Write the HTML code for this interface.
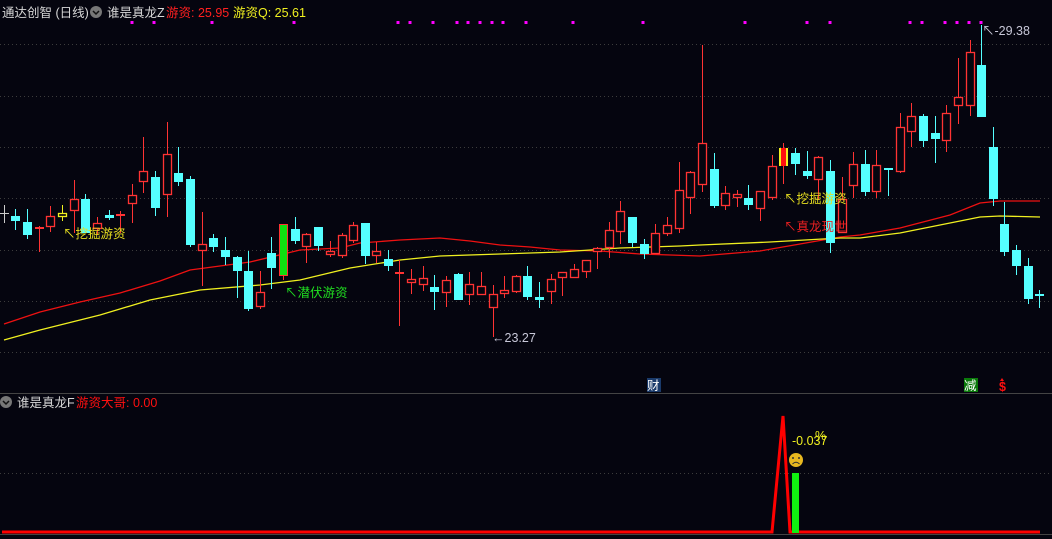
<!DOCTYPE html>
<html><head><meta charset="utf-8">
<style>
html,body{margin:0;padding:0;background:#05050f;}
body{width:1052px;height:539px;overflow:hidden;position:relative;font-family:"Liberation Sans","Noto Sans CJK SC",sans-serif;}
svg{position:absolute;left:0;top:0;}
.t{font-family:"Liberation Sans","Noto Sans CJK SC",sans-serif;font-size:12.5px;}
</style></head>
<body>
<svg id="s" width="1052" height="539" viewBox="0 0 1052 539" xmlns="http://www.w3.org/2000/svg">
<rect width="1052" height="539" fill="#05050f"/>
<g stroke="#3c3c3c" stroke-width="1" stroke-dasharray="1,3">
<line x1="0" y1="44.5" x2="1052" y2="44.5"/>
<line x1="0" y1="96.5" x2="1052" y2="96.5"/>
<line x1="0" y1="147.5" x2="1052" y2="147.5"/>
<line x1="0" y1="198.5" x2="1052" y2="198.5"/>
<line x1="0" y1="250.5" x2="1052" y2="250.5"/>
<line x1="0" y1="301.5" x2="1052" y2="301.5"/>
<line x1="0" y1="352.5" x2="1052" y2="352.5"/>
<line x1="0" y1="473.5" x2="1052" y2="473.5"/>
</g>
<line x1="0" y1="393.5" x2="1052" y2="393.5" stroke="#444" stroke-width="1"/>
<line x1="0" y1="534.5" x2="1052" y2="534.5" stroke="#444" stroke-width="1"/>
<!-- moving averages -->
<polyline fill="none" stroke="#ee1111" stroke-width="1.3" points="4,324 40,312 80,302 120,293 160,281 190,270 250,262 300,250 340,248 360,243 400,240 440,238 470,241 500,245 530,247 560,250 600,251 640,254 700,256 760,251 800,244 840,237 860,235 900,228 950,215 980,203 1000,201 1040,201"/>
<polyline fill="none" stroke="#f0f020" stroke-width="1.3" points="4,340 40,330 100,315 150,300 200,290 260,285 300,280 350,268 400,260 440,256 500,254 560,252 620,248 680,246 700,245 770,242 840,238 860,238 900,233 940,225 980,217 1000,216 1040,217"/>
<g id="candles"></g>
<g fill="#ff00ff" id="dots"></g>
<!-- annotations -->
<text x="63" y="238" class="t" fill="#e8e020">↖挖掘游资</text>
<text x="285" y="297" class="t" fill="#20e020">↖潜伏游资</text>
<text x="784" y="203" class="t" fill="#e8e020">↖挖掘游资</text>
<text x="784" y="231" class="t" fill="#ee2020">↖真龙现世</text>
<text x="492" y="342" class="t" fill="#c8c8d8">←23.27</text>
<text x="982" y="35" class="t" fill="#c8c8d8">↖-29.38</text>
<!-- header -->
<text x="2" y="17" class="t" fill="#d8d8d8">通达创智 (日线)</text>
<circle cx="96" cy="12" r="6" fill="#777"/>
<path d="M93 11 L96 14 L99 11" stroke="#111" stroke-width="1.5" fill="none"/>
<text x="107" y="17" class="t" fill="#d8d8d8">谁是真龙Z</text>
<text x="166" y="17" class="t" fill="#ff2020">游资: 25.95</text>
<text x="233" y="17" class="t" fill="#f0f020">游资Q: 25.61</text>
<!-- lower panel -->
<rect x="647" y="378" width="14" height="14" fill="#1a3a6a"/>
<text x="647" y="390" class="t" fill="#fff" font-size="12">财</text>
<rect x="964" y="378" width="14" height="14" fill="#0a7a0a"/>
<text x="964" y="390" class="t" fill="#fff" font-size="12">减</text>
<text x="999" y="391" class="t" fill="#ff1010" font-size="12" font-weight="bold">$</text>
<path d="M1000 381 L1002 378 L1004 381Z" fill="#ff1010"/>
<circle cx="6" cy="402" r="6" fill="#777"/>
<path d="M3 401 L6 404 L9 401" stroke="#111" stroke-width="1.5" fill="none"/>
<text x="17" y="407" class="t" fill="#d8d8d8">谁是真龙F</text>
<text x="76" y="407" class="t" fill="#ff1010">游资大哥: 0.00</text>
<polyline fill="none" stroke="#ff0000" stroke-width="3" points="2,532 772,532 783,416 790,532 1040,532"/>
<rect x="792" y="473" width="7" height="60" fill="#10f010"/>
<text x="792" y="445" class="t" fill="#f0f020">-0.037</text>
<text x="815" y="440" class="t" fill="#f0f020" font-size="10">%</text>
<circle cx="796" cy="460" r="7" fill="#e8b820"/>
<circle cx="793" cy="458" r="1" fill="#333"/><circle cx="799" cy="458" r="1" fill="#333"/>
<path d="M792.5 464 Q796 460.5 799.5 464" stroke="#333" stroke-width="1" fill="none"/>
</svg>
<script>
var C=[[15,216,221,209,230,'c'],[27,222,235,209,239,'c'],[39,227,229,226,252,'r'],[50,216,227,206,232,'r'],[62,213,217,205,221,'y'],[74,199,211,180,233,'r'],[85,199,233,194,233,'c'],[97,223,229,217,235,'r'],[109,215,218,210,220,'c'],[120,214,216,211,233,'r'],[132,195,204,184,223,'r'],[143,171,182,137,193,'r'],[155,177,208,171,216,'c'],[167,154,195,122,217,'r'],[178,173,182,147,186,'c'],[190,179,245,176,247,'c'],[202,244,251,212,286,'r'],[213,238,247,234,252,'c'],[225,250,257,237,265,'c'],[237,257,271,256,298,'c'],[248,271,309,251,311,'c'],[260,292,307,271,309,'r'],[271,253,268,237,289,'c'],[283,224,276,224,280,'g'],[295,229,241,217,244,'c'],[306,234,247,233,263,'r'],[318,227,246,227,251,'c'],[330,251,255,241,257,'r'],[342,235,256,233,258,'r'],[353,225,241,222,243,'r'],[365,223,256,223,264,'c'],[376,251,256,242,263,'r'],[388,259,266,250,271,'c'],[399,272,274,260,326,'r'],[411,279,283,269,294,'r'],[423,278,285,266,291,'r'],[434,287,292,275,310,'c'],[446,280,293,276,307,'r'],[458,274,300,273,300,'c'],[469,284,295,272,305,'r'],[481,286,295,272,295,'r'],[493,294,308,285,337,'r'],[504,290,294,276,298,'r'],[516,276,292,275,293,'r'],[527,276,297,266,300,'c'],[539,297,300,282,308,'c'],[551,279,292,274,304,'r'],[562,272,278,272,296,'r'],[574,269,278,264,278,'r'],[586,260,272,260,278,'r'],[597,248,252,247,269,'r'],[609,230,248,222,258,'r'],[620,211,232,201,244,'r'],[632,217,243,217,247,'c'],[644,244,254,239,259,'c'],[655,233,254,224,254,'r'],[667,225,234,217,236,'r'],[679,190,229,162,233,'r'],[690,172,198,171,214,'r'],[702,143,185,45,192,'r'],[714,169,206,153,208,'c'],[725,193,206,186,210,'r'],[737,194,198,190,207,'r'],[748,198,205,185,210,'c'],[760,191,209,191,221,'r'],[772,166,198,155,200,'r'],[783,148,166,143,184,'yr'],[795,153,164,148,175,'c'],[807,171,176,151,179,'c'],[818,157,180,156,200,'r'],[830,171,243,160,253,'c'],[842,199,233,177,233,'r'],[853,164,186,152,198,'r'],[865,164,192,150,196,'c'],[876,165,192,150,198,'r'],[888,168,169,168,196,'c'],[900,127,172,113,173,'r'],[911,116,132,103,147,'r'],[923,116,141,114,147,'c'],[935,133,139,116,163,'c'],[946,113,141,105,152,'r'],[958,97,106,58,124,'r'],[970,52,106,40,116,'r'],[981,65,117,25,117,'c'],[993,147,199,127,206,'c'],[1004,224,252,202,256,'c'],[1016,250,266,245,275,'c'],[1028,266,299,258,304,'c'],[1039,294,296,290,308,'c']];
var ns="http://www.w3.org/2000/svg",g=document.getElementById('candles');
function el(n,a){var e=document.createElementNS(ns,n);for(var k in a)e.setAttribute(k,a[k]);g.appendChild(e);return e;}
el('line',{x1:0,y1:213.5,x2:9,y2:213.5,stroke:'#ccc'});el('line',{x1:4.5,y1:205,x2:4.5,y2:223,stroke:'#ccc'});
C.forEach(function(c){var x=c[0],t=c[1],b=c[2],h=c[3],l=c[4],k=c[5];
var col=(k=='c')?'#55ffff':(k=='y')?'#f0f020':'#ff3333';
el('line',{x1:x+.5,y1:h,x2:x+.5,y2:l,stroke:col,'stroke-width':1});
if(b-t<3){el('rect',{x:x-4,y:t,width:9,height:Math.max(2,b-t),fill:col});return;}
if(k=='c'){el('rect',{x:x-4,y:t,width:9,height:b-t,fill:col});}
else if(k=='g'){el('rect',{x:x-3.5,y:t+.5,width:8,height:b-t-1,fill:'#10e010',stroke:'#ff3333','stroke-width':1});}
else if(k=='yr'){el('rect',{x:x-4,y:t,width:9,height:b-t,fill:'#f0f020'});el('rect',{x:x-2,y:t,width:5,height:b-t,fill:'#ff1010'});}
else{el('rect',{x:x-3.5,y:t+.5,width:8,height:b-t-1,fill:'#05050f',stroke:col,'stroke-width':1.3});}
});
var d=document.getElementById('dots');
[132,154,212,294,398,410,433,457,468,480,492,503,526,573,643,745,807,830,910,922,945,957,969,981].forEach(function(x){var r=document.createElementNS(ns,'rect');r.setAttribute('x',x-1.5);r.setAttribute('y',21);r.setAttribute('width',3);r.setAttribute('height',3);d.appendChild(r);});
</script>
</body></html>
